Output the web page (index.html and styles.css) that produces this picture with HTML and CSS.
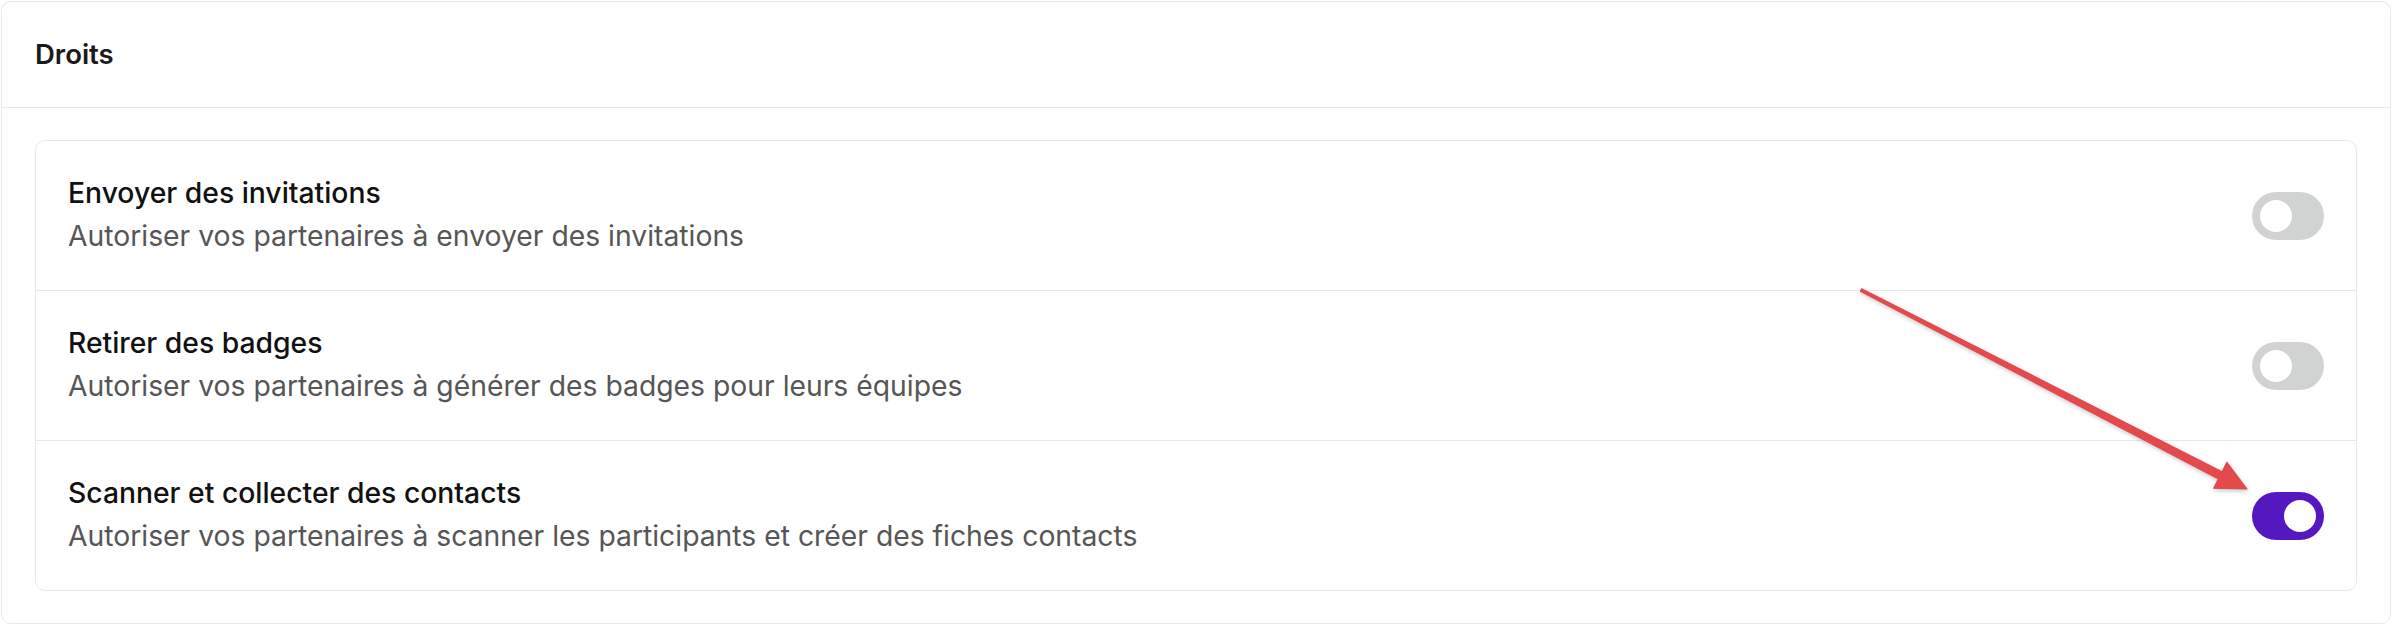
FILE: index.html
```html
<!DOCTYPE html>
<html lang="fr">
<head>
<meta charset="utf-8">
<title>Droits</title>
<link rel="stylesheet" href="styles.css">
</head>
<body>
  <section class="card">
    <header class="card-header">
      <h2 class="card-title">Droits</h2>
    </header>
    <div class="card-body">
      <div class="list">
        <div class="row">
          <div class="row-text">
            <div class="row-title">Envoyer des invitations</div>
            <div class="row-desc">Autoriser vos partenaires à envoyer des invitations</div>
          </div>
          <span class="toggle"><span class="knob"></span></span>
        </div>
        <div class="row">
          <div class="row-text">
            <div class="row-title">Retirer des badges</div>
            <div class="row-desc">Autoriser vos partenaires à générer des badges pour leurs équipes</div>
          </div>
          <span class="toggle"><span class="knob"></span></span>
        </div>
        <div class="row">
          <div class="row-text">
            <div class="row-title">Scanner et collecter des contacts</div>
            <div class="row-desc">Autoriser vos partenaires à scanner les participants et créer des fiches contacts</div>
          </div>
          <span class="toggle on"><span class="knob"></span></span>
        </div>
      </div>
    </div>
  </section>
  <svg class="arrow" width="2394" height="628" viewBox="0 0 2394 628" xmlns="http://www.w3.org/2000/svg">
    <polygon points="1861.7,288.7 2222.1,471.7 2226.9,462.4 2247,489 2213.7,488.2 2218.5,478.9 1860.3,291.3" fill="#e4494c" stroke="#e4494c" stroke-width="1.2" stroke-linejoin="round"/>
  </svg>
</body>
</html>
```

FILE: styles.css
```css
* {
  box-sizing: border-box;
}

html, body {
  background: #ffffff;
}

body {
  margin: 1px;
  font-family: Inter, "Noto Sans", "Liberation Sans", sans-serif;
  color: #141414;
}

.card {
  width: 2390px;
  border: 1px solid #e9e9e9;
  border-radius: 10px;
  background: #fff;
}

.card-header {
  height: 106px;
  display: flex;
  align-items: center;
  padding: 0 33px 1px;
  border-bottom: 1px solid #e9e9e9;
}

.card-title {
  margin: 0;
  font-size: 27.5px;
  line-height: 40px;
  font-weight: 600;
  color: #1a1a1a;
}

.card-body {
  padding: 32px 33px;
}

.list {
  border: 1px solid #e9e9e9;
  border-radius: 10px;
}

.row {
  display: flex;
  align-items: center;
  justify-content: space-between;
  padding: 34px 32px 36px;
}

.row + .row {
  border-top: 1px solid #e9e9e9;
}

.row-text {
  display: flex;
  flex-direction: column;
  gap: 7px;
}

.row-title {
  font-size: 28.3px;
  line-height: 36px;
  font-weight: 500;
  color: #111111;
}

.row-desc {
  font-size: 28.3px;
  line-height: 36px;
  font-weight: 400;
  color: #565656;
}

.toggle {
  width: 72px;
  height: 48px;
  border-radius: 24px;
  background: #d1d2d2;
  display: flex;
  align-items: center;
  padding: 0 8px;
  flex-shrink: 0;
  margin-top: 2px;
}

.knob {
  width: 32px;
  height: 32px;
  border-radius: 50%;
  background: #fff;
}

.toggle.on {
  background: #5517bf;
  justify-content: flex-end;
}

.arrow {
  position: absolute;
  top: 0;
  left: 0;
  pointer-events: none;
  filter: drop-shadow(1px 2px 2px rgba(0, 0, 0, 0.22));
}
```
